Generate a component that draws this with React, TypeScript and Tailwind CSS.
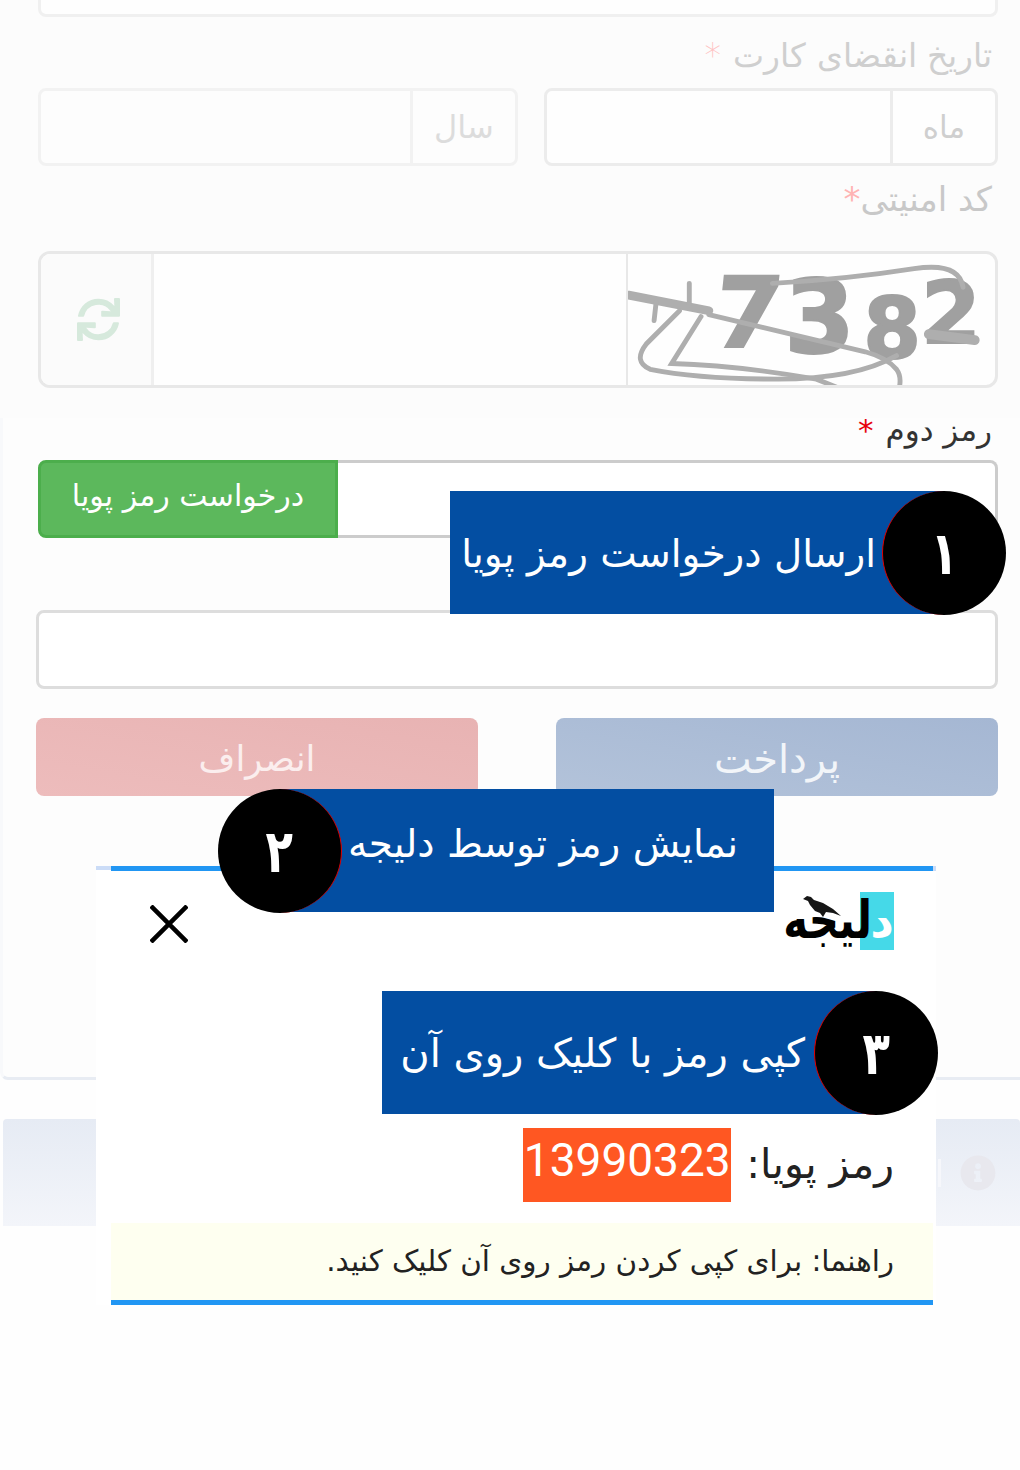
import { FaInfoCircle, FaSync } from "react-icons/fa";

const fa = "font-['DejaVu_Sans',sans-serif]";

const Captcha = () => (
  <svg viewBox="0 0 370 134" className="h-full w-full" fill="none" direction="ltr">
    <g fill="#a0a0a0" stroke="#a0a0a0" strokeWidth="2" fontFamily="'DejaVu Sans', sans-serif" fontWeight="700" direction="ltr">
      <text x="92" y="95" fontSize="100" transform="skewX(-6)">7</text>
      <text x="157" y="101" fontSize="104">3</text>
      <text x="238" y="106" fontSize="85">8</text>
      <text x="297" y="91" fontSize="88">2</text>
    </g>
    <g stroke="#aeaeae" strokeLinecap="round">
      <path d="M-2 42 L80 58" strokeWidth="9" />
      <path d="M60 30 L60 52 M26 50 L24 68" strokeWidth="5" />
      <path d="M80 62 L240 100 Q262 106 272 118 Q278 126 274 140" strokeWidth="5" />
      <path d="M50 58 L16 92 Q2 110 20 118 Q70 128 150 128 Q230 128 272 104" strokeWidth="5" />
      <path d="M72 64 L42 112 Q110 114 190 128 L220 140" strokeWidth="5" />
      <path d="M145 30 Q220 26 290 15 Q336 8 340 34" strokeWidth="5" />
      <path d="M305 82 L352 88" strokeWidth="10" />
    </g>
  </svg>
);

const Bird = () => (
  <svg viewBox="0 0 38 22" className="absolute left-[20px] top-[4px] h-[22px] w-[38px]">
    <path d="M0 3 L4 0 L8 1 L11 4 L20 7 L30 13 L38 20 L30 17 L23 16 L20 21 L17 17 L12 15 L7 9 L5 5 Z" fill="#161616" />
  </svg>
);

const Circle = ({ n, side }: { n: string; side: "l" | "r" }) => (
  <div
    className={`relative z-10 flex h-[124px] w-[124px] shrink-0 items-center justify-center rounded-full bg-black text-white ${side === "l" ? "border-l border-[#e00000]" : "border-r border-[#e00000]"}`}
  >
    <span className="inline-block scale-x-75 text-[60px] font-bold leading-none">{n}</span>
  </div>
);

export default function App() {
  return (
    <div dir="rtl" className={`relative h-[1470px] w-[1020px] overflow-hidden bg-[#fefefe] ${fa}`}>
      {/* faded top of the form */}
      <div className="flex h-[418px] flex-col bg-[#fcfcfc] pl-[38px] pr-[22px]">
        <div className="h-[17px] rounded-b-lg border-x-[3px] border-b-[3px] border-[#f0f0f0] bg-[#fefefe]" />
        <div className="flex h-[71px] items-center pr-[6px] pt-[6px] text-[33px] font-extralight text-[#cfcfcf]">
          <span>تاریخ انقضای کارت</span>
          <span className="mr-3 text-[#ffc0c0]">*</span>
        </div>
        <div className="flex h-[78px] gap-[26px]">
          <div className="flex w-[454px] overflow-hidden rounded-lg border-[3px] border-[#ececec] bg-[#fefefe]">
            <div className="flex w-[105px] items-center justify-center border-l-[3px] border-[#ececec] text-[31px] text-[#cfcfcf]">ماه</div>
            <div className="flex-1" />
          </div>
          <div className="flex w-[480px] overflow-hidden rounded-lg border-[3px] border-[#f2f2f2] bg-[#fdfdfd]">
            <div className="flex w-[105px] items-center justify-center border-l-[3px] border-[#f2f2f2] text-[32px] text-[#dcdcdc]">سال</div>
            <div className="flex-1" />
          </div>
        </div>
        <div className="flex h-[85px] items-start pr-[6px] pt-[8px] text-[34px] text-[#c8c8c8]">
          <span>کد امنیتی</span>
          <span className="text-[#ffb4b4]">*</span>
        </div>
        <div className="flex h-[137px] overflow-hidden rounded-xl border-[3px] border-[#e8e8e8] bg-[#fefefe]">
          <div className="w-[369px] shrink-0 border-l-[2px] border-[#e8e8e8]">
            <Captcha />
          </div>
          <div className="flex-1 border-l-[3px] border-[#efefef]" />
          <div className="flex w-[110px] items-center justify-center bg-[#fbfbfb] pl-[4px]">
            <FaSync className="h-[43px] w-[43px] text-[#d6e9dc]" />
          </div>
        </div>
      </div>

      {/* active part of the form */}
      <div className="flex h-[662px] flex-col rounded-bl-lg border-b-[3px] border-l-[3px] border-b-[#e8ecf3] border-l-[#f8f9fb] bg-[#fdfdfd] pl-[35px] pr-[22px]">
        <div className="flex h-[42px] items-center pb-[18px] pr-[6px] text-[31px] text-[#333]">
          <span>رمز دوم</span>
          <span className="mr-3 text-red-600">*</span>
        </div>
        <div className="flex h-[78px]">
          <div className="flex-1 rounded-r-lg border-[3px] border-l-0 border-[#cccccc] bg-white" />
          <div className="flex w-[300px] items-start justify-center rounded-l-lg border-[3px] border-[#4cae4c] bg-[#5cb85c] pt-[10px] text-[30px] text-white">
            درخواست رمز پویا
          </div>
        </div>
        <div className="-ml-[2px] mt-[72px] h-[79px] rounded-lg border-[3px] border-[#dddddd] bg-white" />
        <div className="-ml-[2px] mt-[29px] flex h-[78px] justify-between">
          <div className="flex w-[442px] items-center justify-center rounded-lg bg-gradient-to-bl from-[#a5b7d3] to-[#b3c3da] pt-[4px] text-[40px] text-[#f2f5f9]">
            پرداخت
          </div>
          <div className="flex w-[442px] items-center justify-center rounded-lg bg-gradient-to-bl from-[#e8b3b3] to-[#edbcbc] pt-[4px] text-[35.5px] text-[#fbeeee]">
            انصراف
          </div>
        </div>
      </div>

      {/* info bar behind the modal */}
      <div className="ml-[3px] mt-[39px] flex h-[107px] items-center rounded-t-sm bg-gradient-to-b from-[#e6ebf4] to-[#f3f5fa] pr-[24px]">
        <FaInfoCircle className="h-[36px] w-[36px] text-[#e8e8ee]" />
        <div className="mr-[19px] h-[28px] w-[3px] bg-[#f6f7fb]" />
      </div>

      {/* dynamic password modal */}
      <div className="absolute left-[96px] top-[866px] flex w-[840px] flex-col bg-white">
        <div dir="ltr" className="flex h-[5px]">
          <div className="h-[4px] w-[15px] bg-[#cbdcf7]" />
          <div className="flex-1 bg-[#2196f3]" />
          <div className="w-[3px] bg-[#cbdcf7]" />
        </div>
        <div className="flex h-[121px] items-start justify-between pl-[54px] pr-[42px] pt-[21px]">
          <div className="relative flex h-[58px] items-start">
            <span className="flex h-[58px] w-[34px] items-center justify-center bg-[#45d9e8] pl-[10px] text-[46px] font-bold text-white">د</span>
            <span className="-mr-[12px] inline-block origin-center scale-y-125 pt-[2px] text-[42px] font-bold leading-[52px] text-black">لیجه</span>
            <Bird />
          </div>
          <svg viewBox="0 0 38 38" className="mt-[13px] h-[38px] w-[38px]" stroke="#000" strokeWidth="4.5">
            <path d="M1 1 L37 37 M37 1 L1 37" />
          </svg>
        </div>
        <div className="h-[136px]" />
        <div className="flex h-[74px] items-center pr-[42px] text-[41px] text-[#222]">
          <span>رمز پویا:</span>
          <span className="mr-[15px] flex h-[74px] w-[208px] items-center justify-center bg-[#ff5722] pb-[10px] font-['Roboto',sans-serif] text-[46px] text-white">
            13990323
          </span>
        </div>
        <div className="ml-[15px] mr-[3px] mt-[21px] flex h-[77px] items-center bg-[#fefff0] pr-[39px] text-[29.4px] text-[#222]">
          راهنما: برای کپی کردن رمز روی آن کلیک کنید.
        </div>
        <div className="ml-[15px] mr-[3px] h-[5px] bg-[#2196f3]" />
      </div>

      {/* numbered hints */}
      <div dir="ltr" className="absolute left-[450px] top-[491px] flex items-start">
        <div className="flex h-[123px] w-[495px] items-center bg-[#034ea2] pt-[4px] text-[38.8px] text-white" dir="rtl">
          <span className="mr-[69px] whitespace-nowrap">ارسال درخواست رمز پویا</span>
        </div>
        <div className="-ml-[63px]"><Circle n="۱" side="l" /></div>
      </div>
      <div dir="ltr" className="absolute left-[218px] top-[789px] flex items-start">
        <Circle n="۲" side="r" />
        <div className="-ml-[62px] flex h-[123px] w-[494px] items-center justify-end bg-[#034ea2] pb-[12px] pr-[36px] text-[38.8px] text-white">
          <span className="whitespace-nowrap" dir="rtl">نمایش رمز توسط دلیجه</span>
        </div>
      </div>
      <div dir="ltr" className="absolute left-[382px] top-[991px] flex items-start">
        <div className="flex h-[123px] w-[494px] items-center bg-[#034ea2] text-[40px] text-white" dir="rtl">
          <span className="mr-[71px] whitespace-nowrap">کپی رمز با کلیک روی آن</span>
        </div>
        <div className="-ml-[62px]"><Circle n="۳" side="l" /></div>
      </div>
    </div>
  );
}
